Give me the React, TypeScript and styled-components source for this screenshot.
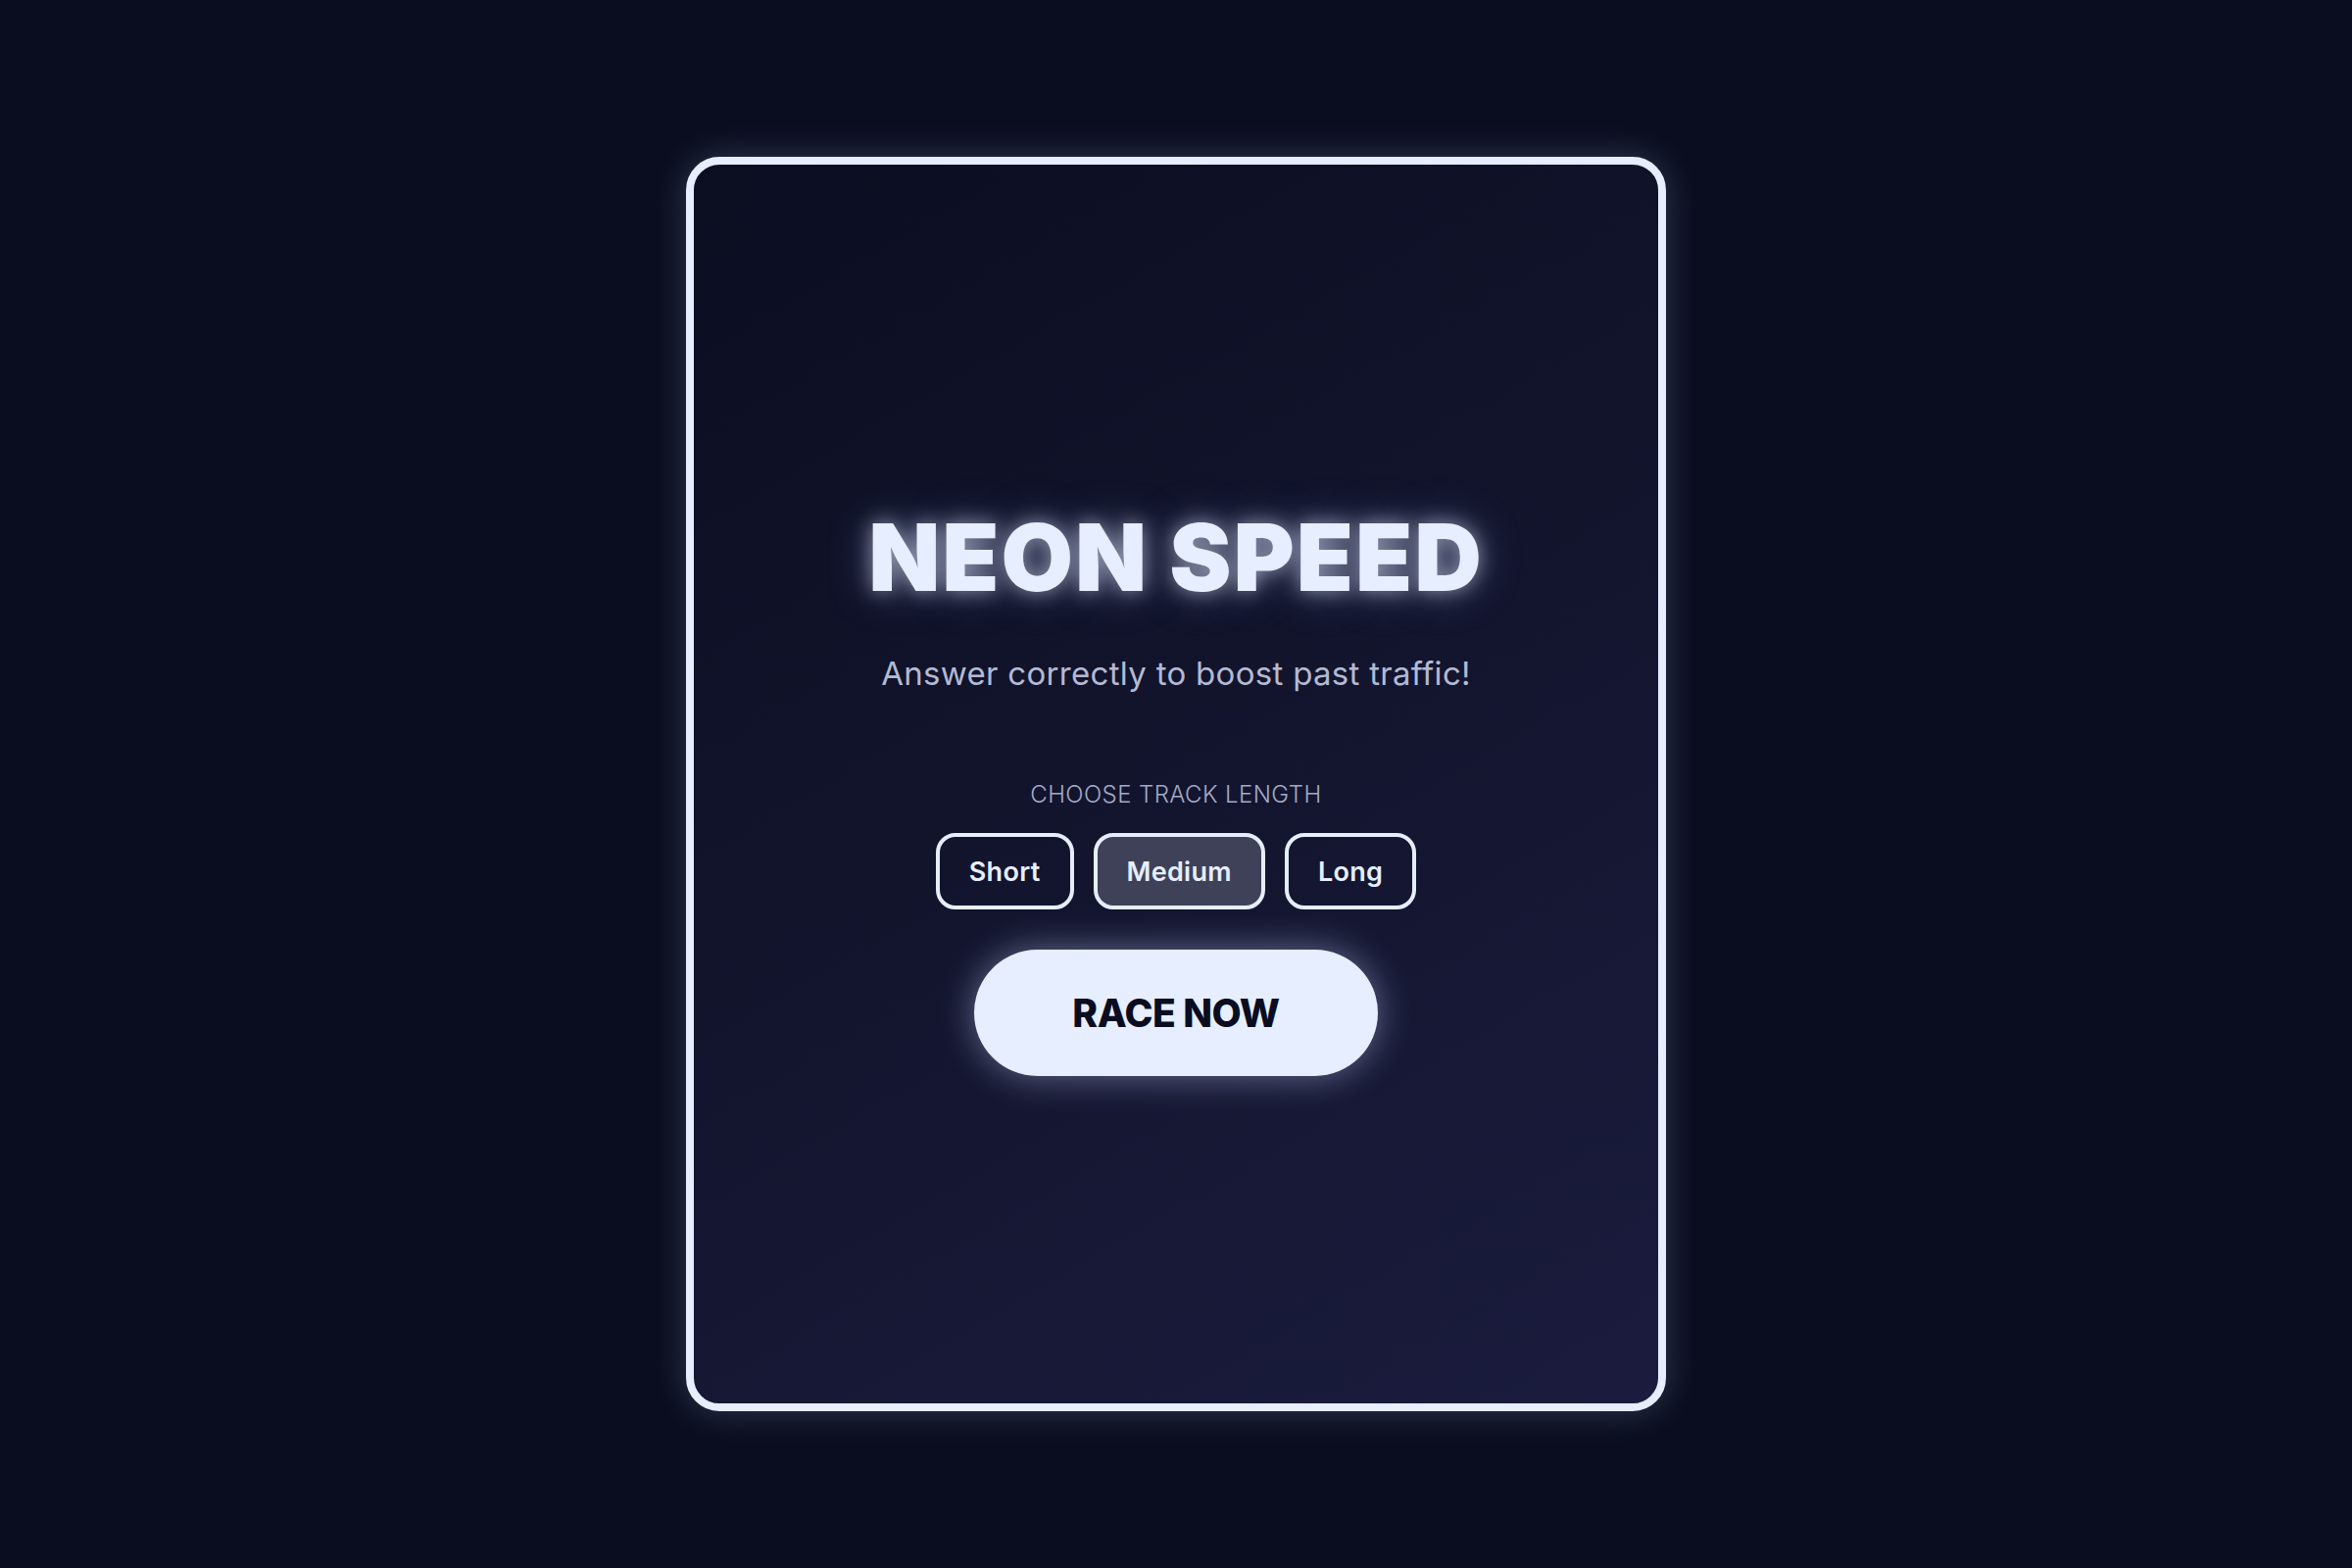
import React, { useState } from 'react';
import styled, { createGlobalStyle } from 'styled-components';

const GlobalStyle = createGlobalStyle`
  html, body {
    margin: 0;
    padding: 0;
    background: #0a0d1f;
  }
  body {
    font-family: Inter, "Noto Sans", "Liberation Sans", sans-serif;
  }
`;

const Page = styled.main`
  width: 2400px;
  height: 1600px;
  display: flex;
  align-items: center;
  justify-content: center;
  background: #0a0d1f;
`;

const Card = styled.section`
  box-sizing: border-box;
  width: 1000px;
  height: 1280px;
  border: 8px solid #e6eeff;
  border-radius: 34px;
  background: linear-gradient(150deg, #0b0e21 0%, #12142c 45%, #1b1c3e 100%);
  box-shadow: 0 0 36px rgba(200, 212, 255, 0.22);
  display: flex;
  flex-direction: column;
  align-items: center;
  justify-content: center;
  padding-top: 15px;
`;

const Title = styled.h1`
  margin: 0;
  font-size: 95px;
  font-weight: 900;
  line-height: 1.1;
  letter-spacing: 2px;
  color: #e6eeff;
  text-shadow: 0 0 20px rgba(230, 238, 255, 0.55), 0 0 44px rgba(180, 195, 255, 0.35);
`;

const Subtitle = styled.p`
  margin: 46px 0 0;
  font-size: 33px;
  font-weight: 400;
  letter-spacing: 0.3px;
  color: #b3bad3;
`;

const Label = styled.div`
  margin-top: 89px;
  font-size: 24px;
  font-weight: 300;
  letter-spacing: 0.4px;
  color: #a3aac6;
  text-transform: uppercase;
`;

const LengthRow = styled.div`
  margin-top: 25px;
  display: flex;
  gap: 20px;
`;

const LengthButton = styled.button<{ $active: boolean }>`
  box-sizing: border-box;
  height: 78px;
  padding: 0 30px;
  border: 4px solid #e6eeff;
  border-radius: 20px;
  background: ${({ $active }) => ($active ? '#3f4159' : 'transparent')};
  color: #e6eeff;
  font-family: inherit;
  font-size: 27px;
  font-weight: 600;
  letter-spacing: 0.3px;
  cursor: pointer;
`;

const RaceButton = styled.button`
  margin-top: 41px;
  width: 412px;
  height: 129px;
  border: none;
  border-radius: 65px;
  background: #e6eeff;
  color: #0a0d1f;
  font-family: inherit;
  font-size: 39px;
  font-weight: 800;
  letter-spacing: -0.5px;
  box-shadow: 0 0 36px rgba(200, 212, 255, 0.45);
  cursor: pointer;
`;

const lengths = ['Short', 'Medium', 'Long'];

export default function App() {
  const [length, setLength] = useState('Medium');

  return (
    <Page>
      <GlobalStyle />
      <Card>
        <Title>NEON SPEED</Title>
        <Subtitle>Answer correctly to boost past traffic!</Subtitle>
        <Label>Choose track length</Label>
        <LengthRow>
          {lengths.map((l) => (
            <LengthButton key={l} $active={l === length} onClick={() => setLength(l)}>
              {l}
            </LengthButton>
          ))}
        </LengthRow>
        <RaceButton>RACE NOW</RaceButton>
      </Card>
    </Page>
  );
}
